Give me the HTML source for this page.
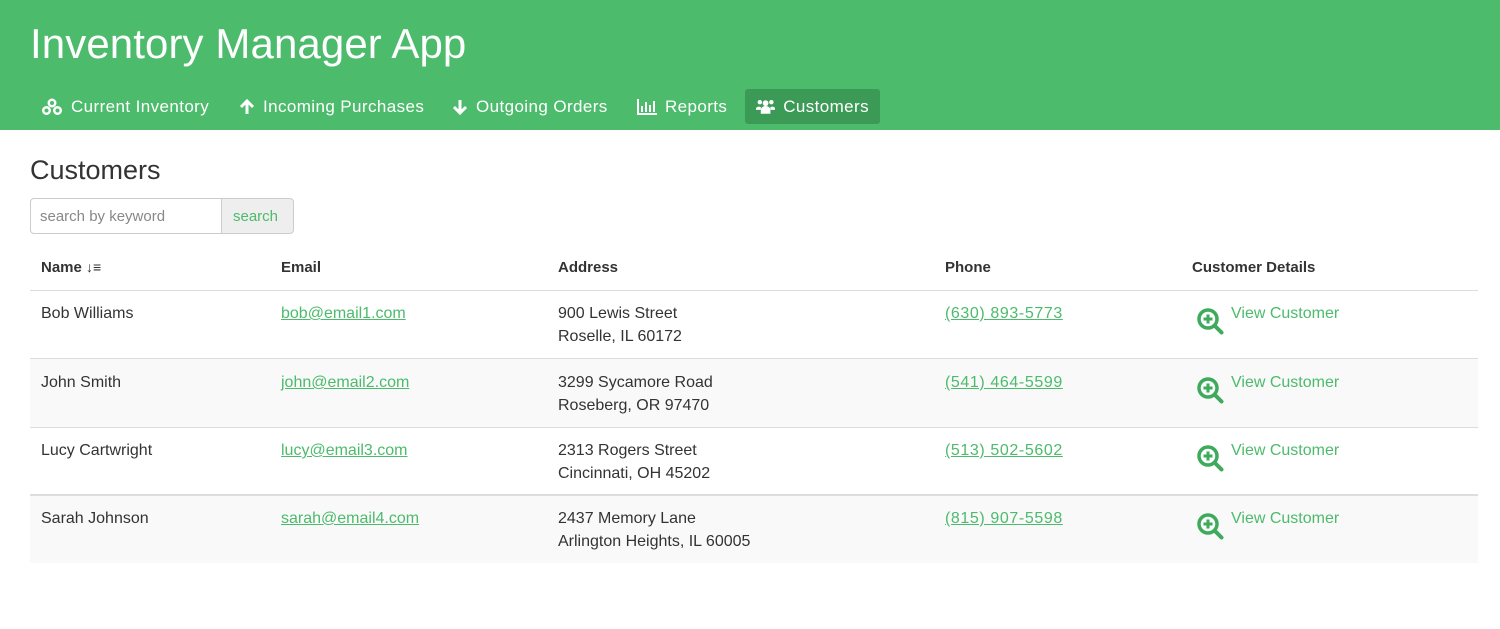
<!DOCTYPE html>
<html><head><style>
*{box-sizing:border-box;margin:0;padding:0}
body{width:1500px;height:629px;background:#fff;font-family:"Liberation Sans",sans-serif;color:#333;position:relative;overflow:hidden}
.hdr{position:absolute;left:0;top:0;width:1500px;height:130px;background:#4cbb6c}
.title{position:absolute;left:30px;top:20px;font-size:42px;color:#fff;font-weight:400;letter-spacing:0.1px}
.nav{position:absolute;top:89px;height:35px;line-height:35px;color:#fff;font-size:17px;letter-spacing:0.4px;padding:0 11px;white-space:nowrap;display:flex;align-items:center}
.nav svg{margin-right:8px}
.act{background:#3c9a57;border-radius:3px}
h2{position:absolute;left:30px;top:155px;font-size:27px;font-weight:400;color:#333}
.inp{position:absolute;left:30px;top:198px;width:192px;height:36px;border:1px solid #ccc;border-radius:4px 0 0 4px;font-size:15px;color:#888;padding:9px 9px}
.btn{position:absolute;left:221px;top:198px;width:73px;height:36px;border:1px solid #ccc;border-radius:0 4px 4px 0;background:#eee;font-size:15px;color:#4cbb6c;padding:9px 11px}
.row{position:absolute;left:30px;width:1448px;border-top:1px solid #ddd}
.c{position:absolute;font-size:16px;line-height:23px;white-space:nowrap}
a{color:#4cbb6c;text-decoration:underline}
a.p{letter-spacing:0.6px}
.th{font-weight:bold;top:259px;font-size:15px;position:absolute;white-space:nowrap}
</style></head><body>
<div class="hdr">
<div class="title">Inventory Manager App</div>
<div class="nav" style="left:30px"><svg width="22" height="18" viewBox="0 0 22 18" fill="#fff"><circle cx="11" cy="5" r="4.5"/><circle cx="5.5" cy="12.5" r="4.5"/><circle cx="16.5" cy="12.5" r="4.5"/><circle cx="11" cy="5" r="2" fill="#4cbb6c"/><circle cx="5.5" cy="12.5" r="2" fill="#4cbb6c"/><circle cx="16.5" cy="12.5" r="2" fill="#4cbb6c"/></svg>Current Inventory</div>
<div class="nav" style="left:228px"><svg width="16" height="16" viewBox="0 0 16 16"><path d="M8 2v13M2 8l6-6 6 6" stroke="#fff" stroke-width="3" fill="none"/></svg>Incoming Purchases</div>
<div class="nav" style="left:441px"><svg width="16" height="16" viewBox="0 0 16 16"><path d="M8 1v13M2 8l6 6 6-6" stroke="#fff" stroke-width="3" fill="none"/></svg>Outgoing Orders</div>
<div class="nav" style="left:626px"><svg width="20" height="16" viewBox="0 0 20 16" fill="#fff"><rect x="0" y="0" width="2" height="16"/><rect x="0" y="14" width="20" height="2"/><rect x="4" y="7" width="2" height="6"/><rect x="8" y="3" width="2" height="10"/><rect x="12" y="6" width="2" height="7"/><rect x="16" y="2" width="2" height="11"/></svg>Reports</div>
<div class="nav act" style="left:745px;width:135px"><svg width="20" height="16" viewBox="0 0 20 16" fill="#fff"><circle cx="10" cy="4" r="3"/><circle cx="4" cy="3" r="2.3"/><circle cx="16" cy="3" r="2.3"/><path d="M5 15v-4a5 4 0 0 1 10 0v4z"/><path d="M0 11v-2a4 3 0 0 1 5-1v3z"/><path d="M20 11v-2a4 3 0 0 0-5-1v3z"/></svg>Customers</div>
</div>
<h2>Customers</h2>
<div class="inp">search by keyword</div>
<div class="btn">search</div>
<div class="th" style="left:41px">Name <span style="font-size:14px">↓≡</span></div>
<div class="th" style="left:281px">Email</div>
<div class="th" style="left:558px">Address</div>
<div class="th" style="left:945px">Phone</div>
<div class="th" style="left:1192px">Customer Details</div>

<div class="row" style="top:290px;height:69px;border-top:1px solid #ddd"></div>
<div class="row" style="top:358px;height:69px;background:#f9f9f9"></div>
<div class="row" style="top:427px;height:68px"></div>
<div class="row" style="top:494px;height:69px;background:#f9f9f9;border-top:2px solid #ddd"></div>

<div style="position:absolute;left:0;top:302px">
<div class="c" style="left:41px">Bob Williams</div><div class="c" style="left:281px"><a>bob@email1.com</a></div><div class="c" style="left:558px">900 Lewis Street<br>Roselle, IL 60172</div><div class="c" style="left:945px"><a class="p">(630) 893-5773</a></div>
</div>
<div style="position:absolute;left:0;top:371px">
<div class="c" style="left:41px">John Smith</div><div class="c" style="left:281px"><a>john@email2.com</a></div><div class="c" style="left:558px">3299 Sycamore Road<br>Roseberg, OR 97470</div><div class="c" style="left:945px"><a class="p">(541) 464-5599</a></div>
</div>
<div style="position:absolute;left:0;top:439px">
<div class="c" style="left:41px">Lucy Cartwright</div><div class="c" style="left:281px"><a>lucy@email3.com</a></div><div class="c" style="left:558px">2313 Rogers Street<br>Cincinnati, OH 45202</div><div class="c" style="left:945px"><a class="p">(513) 502-5602</a></div>
</div>
<div style="position:absolute;left:0;top:507px">
<div class="c" style="left:41px">Sarah Johnson</div><div class="c" style="left:281px"><a>sarah@email4.com</a></div><div class="c" style="left:558px">2437 Memory Lane<br>Arlington Heights, IL 60005</div><div class="c" style="left:945px"><a class="p">(815) 907-5598</a></div>
</div>

<svg width="0" height="0" style="position:absolute"><defs><g id="mg"><circle cx="12" cy="12" r="9" stroke="#3daa5c" stroke-width="3.5" fill="none"/><path d="M18.5 18.5l7 7" stroke="#3daa5c" stroke-width="4" stroke-linecap="round"/><path d="M12 7.5v9M7.5 12h9" stroke="#3daa5c" stroke-width="3"/></g></defs></svg>
<svg style="position:absolute;left:1196px;top:307px" width="30" height="30"><use href="#mg"/></svg>
<div class="c" style="left:1231px;top:302px;color:#4cbb6c">View Customer</div>
<svg style="position:absolute;left:1196px;top:376px" width="30" height="30"><use href="#mg"/></svg>
<div class="c" style="left:1231px;top:371px;color:#4cbb6c">View Customer</div>
<svg style="position:absolute;left:1196px;top:444px" width="30" height="30"><use href="#mg"/></svg>
<div class="c" style="left:1231px;top:439px;color:#4cbb6c">View Customer</div>
<svg style="position:absolute;left:1196px;top:512px" width="30" height="30"><use href="#mg"/></svg>
<div class="c" style="left:1231px;top:507px;color:#4cbb6c">View Customer</div>
</body></html>
